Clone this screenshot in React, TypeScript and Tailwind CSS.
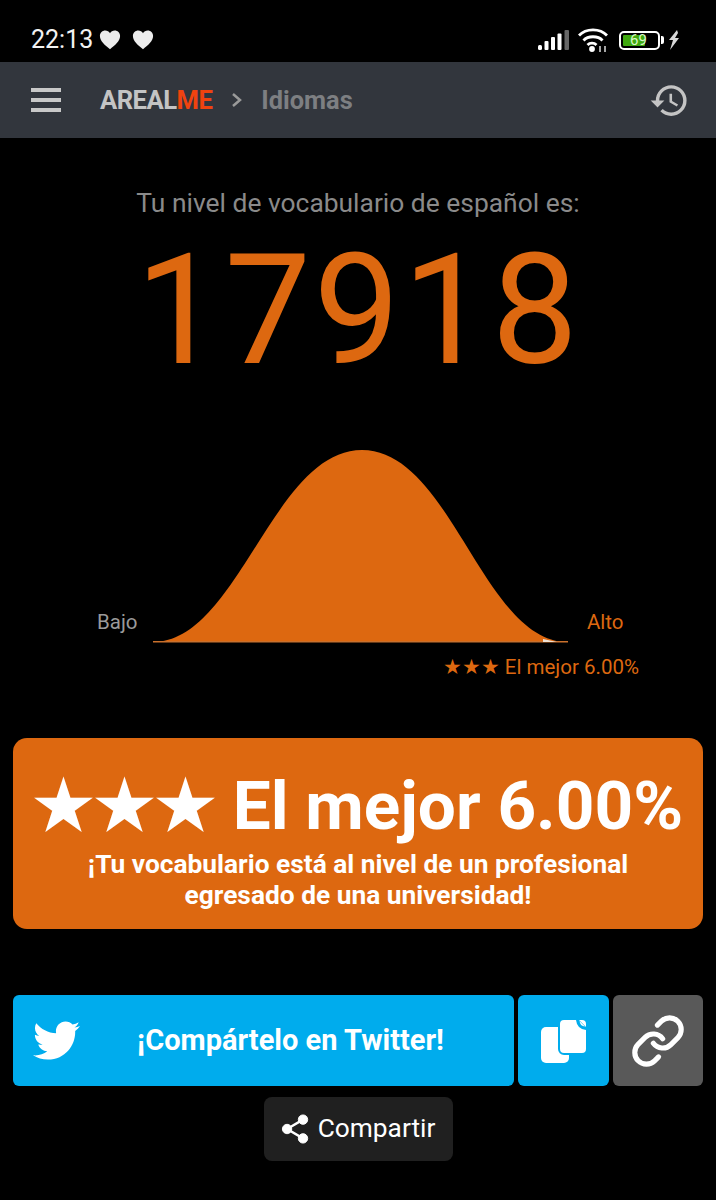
import React from 'react';
import { FaTwitter } from 'react-icons/fa';
import { MdHistory } from 'react-icons/md';
import { Link } from 'lucide-react';

function Heart() {
  return (
    <svg viewBox="0 0 24 24" className="w-[22px] h-[22px]" fill="#ececec">
      <path d="M12 22 C6 17 1 13 1 7.500 C1 3.800 3.800 1.500 6.800 1.500 C9 1.500 10.900 2.600 12 4.500 C13.100 2.600 15 1.500 17.200 1.500 C20.200 1.500 23 3.800 23 7.500 C23 13 18 17 12 22 Z" />
    </svg>
  );
}

function StatusBar() {
  return (
    <div className="h-[62px] flex items-center justify-between pt-[18px] pl-[31px] pr-[36px] text-white">
      <div className="flex items-center">
        <span className="text-[25px] leading-[30px] text-[#f2f2f2]">22:13</span>
        <span className="ml-[6px]"><Heart /></span>
        <span className="ml-[11px]"><Heart /></span>
      </div>
      <div className="flex items-center">
        <svg width="31" height="20" viewBox="0 0 31 20">
          <rect x="0" y="15" width="4" height="5" rx="1.500" fill="#fff" />
          <rect x="6.500" y="11" width="4" height="9" rx="1" fill="#fff" />
          <rect x="13" y="7" width="4" height="13" rx="1" fill="#fff" />
          <rect x="19.500" y="3.500" width="4" height="16.500" rx="1" fill="#fff" />
          <rect x="26.500" y="0" width="4.500" height="20" rx="1" fill="#666" />
        </svg>
        <svg width="30" height="24" viewBox="0 0 30 24" fill="none" stroke="#fff" strokeWidth="2.800" className="ml-[9px]">
          <path d="M1 7.500 C8 0 22 0 29 7.500" />
          <path d="M5.500 12.500 C10 7.500 20 7.500 24.500 12.500" />
          <path d="M9.500 17 C12 14.500 16 14.500 18.500 17" />
          <circle cx="14" cy="21" r="1.500" fill="#fff" />
          <path d="M22 24 V18 M27 24 V18" strokeWidth="1.500" stroke="#ddd" />
        </svg>
        <div className="flex items-center ml-[11px]">
          <div className="w-[41px] h-[19px] border-2 border-white rounded-[5px] p-[2px] flex">
            <div className="w-[22px] bg-[#3fa80f] rounded-[1px] flex items-center">
              <span className="text-[15px] leading-none text-[#d9f7c8] pl-[7px]">69</span>
            </div>
          </div>
          <div className="w-[3px] h-[8px] bg-white rounded-r-[2px] ml-[1px]" />
        </div>
        <svg width="12" height="20" viewBox="0 0 12 20" fill="#d8d8d8" className="ml-[4px]">
          <path d="M9 0 L1 10 L5 10 L2 20 L11 8 L7 8 L10 3 Z" />
        </svg>
      </div>
    </div>
  );
}

function NavBar() {
  return (
    <div className="h-[76px] bg-[#32363d] flex items-center pl-[31px] pr-[26px]">
      <div className="w-[30px] flex flex-col gap-[6.500px]">
        <div className="h-[3.500px] bg-[#c8c8c8]" />
        <div className="h-[3.500px] bg-[#c8c8c8]" />
        <div className="h-[3.500px] bg-[#c8c8c8]" />
      </div>
      <span className="ml-[39px] text-[25.600px] font-bold tracking-[-0.5px] text-[#c4c4c4]">
        AREAL<span className="text-[#f0430f]">ME</span>
      </span>
      <svg width="12" height="16" viewBox="0 0 12 16" fill="none" stroke="#9a9a9a" strokeWidth="2.500" className="ml-[19px]">
        <path d="M2 2 L9 8 L2 14" />
      </svg>
      <span className="ml-[18px] text-[25.400px] font-bold text-[#7d7f82]">Idiomas</span>
      <MdHistory className="ml-auto w-[41px] h-[41px] text-[#c4c4c4]" />
    </div>
  );
}

function Chart() {
  return (
    <div className="mt-[51px] relative h-[193px]">
      <svg width="415" height="193" viewBox="0 0 415 193" className="ml-[153px]">
        <path d="M0,192 C85,192 120,0 209,0 C298,0 330,192 415,192 Z" fill="#dd6810" />
        <rect x="0" y="191" width="415" height="1.500" fill="#c9702c" />
        <path d="M390 189 L397 190.500 L404 192 L390 192 Z" fill="#eee2d6" />
      </svg>
      <span className="absolute left-[97px] top-[160px] text-[20.500px] leading-[24px] text-[#9a9a9a]">Bajo</span>
      <span className="absolute left-[587px] top-[160px] text-[20.500px] leading-[24px] text-[#dd6810]">Alto</span>
    </div>
  );
}

export default function App() {
  return (
    <div className="w-[716px] h-[1200px] overflow-hidden bg-black font-['Roboto',sans-serif]">
      <StatusBar />
      <NavBar />

      <p className="mt-[50px] text-center text-[26.400px] leading-[30px] text-[#8a8a8a]">
        Tu nivel de vocabulario de español es:
      </p>
      <p className="mt-[5px] text-center text-[154px] leading-[176px] tracking-[2.500px] text-[#dd6810]">17918</p>

      <Chart />

      <p className="mt-[12px] pr-[77px] text-right text-[20.500px] leading-[24px] text-[#dd6810]">★★★ El mejor 6.00%</p>

      {/* Result banner */}
      <div className="mt-[59px] mx-[13px] h-[191px] rounded-[14px] bg-[#dd6810] text-white flex flex-col items-center pt-[30px]">
        <div className="text-[67.500px] leading-[76px] font-bold whitespace-nowrap">★★★ El mejor 6.00%</div>
        <div className="mt-[5px] text-[26.300px] leading-[31px] font-bold text-center">
          ¡Tu vocabulario está al nivel de un profesional
          <br />
          egresado de una universidad!
        </div>
      </div>

      {/* Share buttons */}
      <div className="mt-[66px] mx-[13px] flex gap-[4px] h-[91px]">
        <div className="relative w-[501px] rounded-[6px] bg-[#00aced] text-white flex items-center justify-center pl-[54px]">
          <FaTwitter className="absolute left-[20px] top-[22px] w-[47px] h-[47px]" />
          <span className="text-[29px] font-bold">¡Compártelo en Twitter!</span>
        </div>
        <div className="w-[91px] rounded-[6px] bg-[#00aced] flex items-center justify-center">
          <svg width="46" height="44" viewBox="0 0 46 44" className="overflow-visible">
            <rect x="0" y="8" width="28" height="36" rx="5" fill="#fff" />
            <rect x="18" y="0" width="28" height="35" rx="5" fill="#fff" stroke="#00aced" strokeWidth="2" />
            <path d="M35 1 L38 1 L45 8 L45 11 Q36 10 35 1 Z" fill="#00aced" />
            <path d="M38.500 2 L44 7.500 Q39 7 38.500 2 Z" fill="#fff" />
          </svg>
        </div>
        <div className="w-[90px] rounded-[6px] bg-[#595959] flex items-center justify-center">
          <Link className="w-[56px] h-[56px] text-white" strokeWidth={2.200} />
        </div>
      </div>

      <div className="mt-[11px] flex justify-center">
        <div className="w-[189px] h-[64px] rounded-[8px] bg-[#202020] flex items-center justify-center gap-[8px] text-white">
          <svg width="29" height="30" viewBox="0 0 30 32" fill="#fff" stroke="#fff">
            <circle cx="23" cy="6" r="5" />
            <circle cx="6" cy="16" r="5" />
            <circle cx="23" cy="26" r="5" />
            <path d="M23 6 L6 16 L23 26" fill="none" strokeWidth="2.500" />
          </svg>
          <span className="text-[26.300px]">Compartir</span>
        </div>
      </div>
    </div>
  );
}
